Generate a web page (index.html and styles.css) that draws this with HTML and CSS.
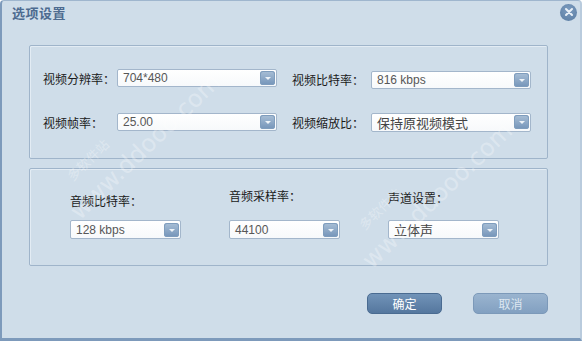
FILE: index.html
```html
<!DOCTYPE html>
<html lang="zh-CN">
<head>
    <meta charset="UTF-8">
    <title>选项设置</title>
    <link rel="stylesheet" href="styles.css">
</head>
<body>
    <div class="dialog">
        <div class="titlebar">
            <span class="title">选项设置</span>
            <span class="close">
                <svg width="10" height="10" viewBox="0 0 10 10"><path d="M2 2 L8 8 M8 2 L2 8" stroke="#e9f0f7" stroke-width="2" stroke-linecap="round"/></svg>
            </span>
        </div>

        <div class="panel video">
            <div class="row">
                <div class="field col1">
                    <label>视频分辨率：</label>
                    <div class="select"><span>704*480</span><i class="arrow"></i></div>
                </div>
                <div class="field col2 low">
                    <label>视频比特率：</label>
                    <div class="select"><span>816 kbps</span><i class="arrow"></i></div>
                </div>
            </div>
            <div class="row">
                <div class="field col1">
                    <label>视频帧率：</label>
                    <div class="select"><span>25.00</span><i class="arrow"></i></div>
                </div>
                <div class="field col2">
                    <label>视频缩放比：</label>
                    <div class="select wide"><span class="cn">保持原视频模式</span><i class="arrow"></i></div>
                </div>
            </div>
        </div>

        <div class="panel audio">
            <div class="acol">
                <label class="t1">音频比特率：</label>
                <div class="select small"><span>128 kbps</span><i class="arrow"></i></div>
            </div>
            <div class="acol">
                <label class="t2">音频采样率：</label>
                <div class="select small"><span>44100</span><i class="arrow"></i></div>
            </div>
            <div class="acol">
                <label class="t3">声道设置：</label>
                <div class="select small"><span class="cn">立体声</span><i class="arrow"></i></div>
            </div>
        </div>

        <div class="buttons">
            <button class="ok">确定</button>
            <button class="cancel">取消</button>
        </div>

        <!-- watermark -->
        <div class="mark m1"><small>多软件站</small>www.ddooo.com</div>
        <div class="mark m2"><small>多软件站</small>www.ddooo.com</div>
    </div>
</body>
</html>
```

FILE: styles.css
```css
html, body {
    margin: 0;
    padding: 0;
}
body {
    width: 582px;
    height: 341px;
    overflow: hidden;
    font-family: "Noto Sans CJK SC", "DejaVu Sans", sans-serif;
    font-size: 12px;
    color: #1a1a1a;
}
.dialog {
    position: relative;
    box-sizing: border-box;
    width: 582px;
    height: 341px;
    background-color: #cfdde9;
    border-left: 2px solid #7d9abb;
    border-bottom: 3px solid #7d9abb;
    border-right: 2px solid #b9cbdd;
    border-top: 1px solid #9fb6ce;
    border-radius: 4px 4px 0 0;
    overflow: hidden;
}
.titlebar {
    display: flex;
    justify-content: space-between;
    align-items: center;
    height: 22px;
    padding: 0 3px 0 10px;
}
.title {
    font-weight: bold;
    font-size: 13px;
    color: #4d6b90;
    letter-spacing: 0.5px;
}
.close {
    display: flex;
    align-items: center;
    justify-content: center;
    width: 17px;
    height: 17px;
    border-radius: 50%;
    background: radial-gradient(circle at 50% 35%, #7c9cbf, #5a7ca2);
}
.panel {
    box-sizing: border-box;
    width: 519px;
    margin-left: 27px;
    border: 1px solid #9fb4ca;
    border-radius: 2px;
    box-shadow: inset 1px 1px 0 #e3ecf4;
}
.video {
    height: 114px;
    margin-top: 22px;
    padding: 23px 0 0 13px;
}
.row {
    display: flex;
    height: 18px;
    margin-bottom: 26px;
}
.field {
    display: flex;
    align-items: center;
}
.field label {
    width: 74px;
    white-space: nowrap;
}
.col1 {
    width: 249px;
}
.col2 label {
    width: 79px;
}
.low {
    margin-top: 3px;
}
.select {
    box-sizing: border-box;
    display: flex;
    align-items: center;
    justify-content: space-between;
    width: 160px;
    height: 18px;
    padding: 0 1px 0 5px;
    background: linear-gradient(#ffffff, #f7f9fb);
    border: 1px solid #a3b6cb;
    border-radius: 2px;
    font-family: "Liberation Sans", sans-serif;
    font-size: 12px;
    color: #575757;
}
.select .cn {
    font-family: "Noto Sans CJK SC", sans-serif;
    font-size: 13px;
    color: #444;
}
.wide {
    height: 19px;
}
.arrow {
    position: relative;
    width: 15px;
    height: 14px;
    border-radius: 3px;
    background: linear-gradient(#a9bfd6, #7494b9);
    box-shadow: inset 0 0 0 1px #7f9dbd;
}
.arrow::after {
    content: "";
    position: absolute;
    left: 5px;
    top: 6px;
    border-left: 3px solid transparent;
    border-right: 3px solid transparent;
    border-top: 3px solid #eef3f8;
}
.audio {
    display: flex;
    height: 98px;
    margin-top: 9px;
    padding: 0 0 0 40px;
}
.acol {
    display: flex;
    flex-direction: column;
    width: 160px;
}
.acol label {
    height: 19px;
    line-height: 19px;
}
.t1 { margin-top: 22px; margin-bottom: 10px; }
.t2 { margin-top: 17px; margin-bottom: 15px; }
.t3 { margin-top: 19px; margin-bottom: 13px; }
.small {
    width: 111px;
    height: 19px;
}
.buttons {
    display: flex;
    justify-content: flex-end;
    gap: 31px;
    width: 546px;
    margin-top: 27px;
}
.buttons button {
    width: 75px;
    height: 21px;
    border-radius: 5px;
    font-family: "Noto Sans CJK SC", sans-serif;
    font-size: 12px;
    padding: 0;
}
.ok {
    background: linear-gradient(#7193b8, #55779e);
    border: 1px solid #4a6b91;
    color: #ffffff;
}
.cancel {
    background: linear-gradient(#9ab4cf, #82a0c1);
    border: 1px solid #7c99b9;
    color: #dde7f1;
}
.mark {
    position: absolute;
    font-family: "DejaVu Sans", sans-serif;
    font-size: 24px;
    color: rgba(255, 255, 255, 0.3);
    transform: rotate(-44deg);
    transform-origin: left bottom;
    white-space: nowrap;
    pointer-events: none;
}
.mark small {
    position: absolute;
    left: 22px;
    top: -26px;
    font-family: "Noto Sans CJK SC", sans-serif;
    font-size: 13px;
}
.m1 {
    left: 82px;
    top: 196px;
}
.m2 {
    left: 374px;
    top: 245px;
}
```
